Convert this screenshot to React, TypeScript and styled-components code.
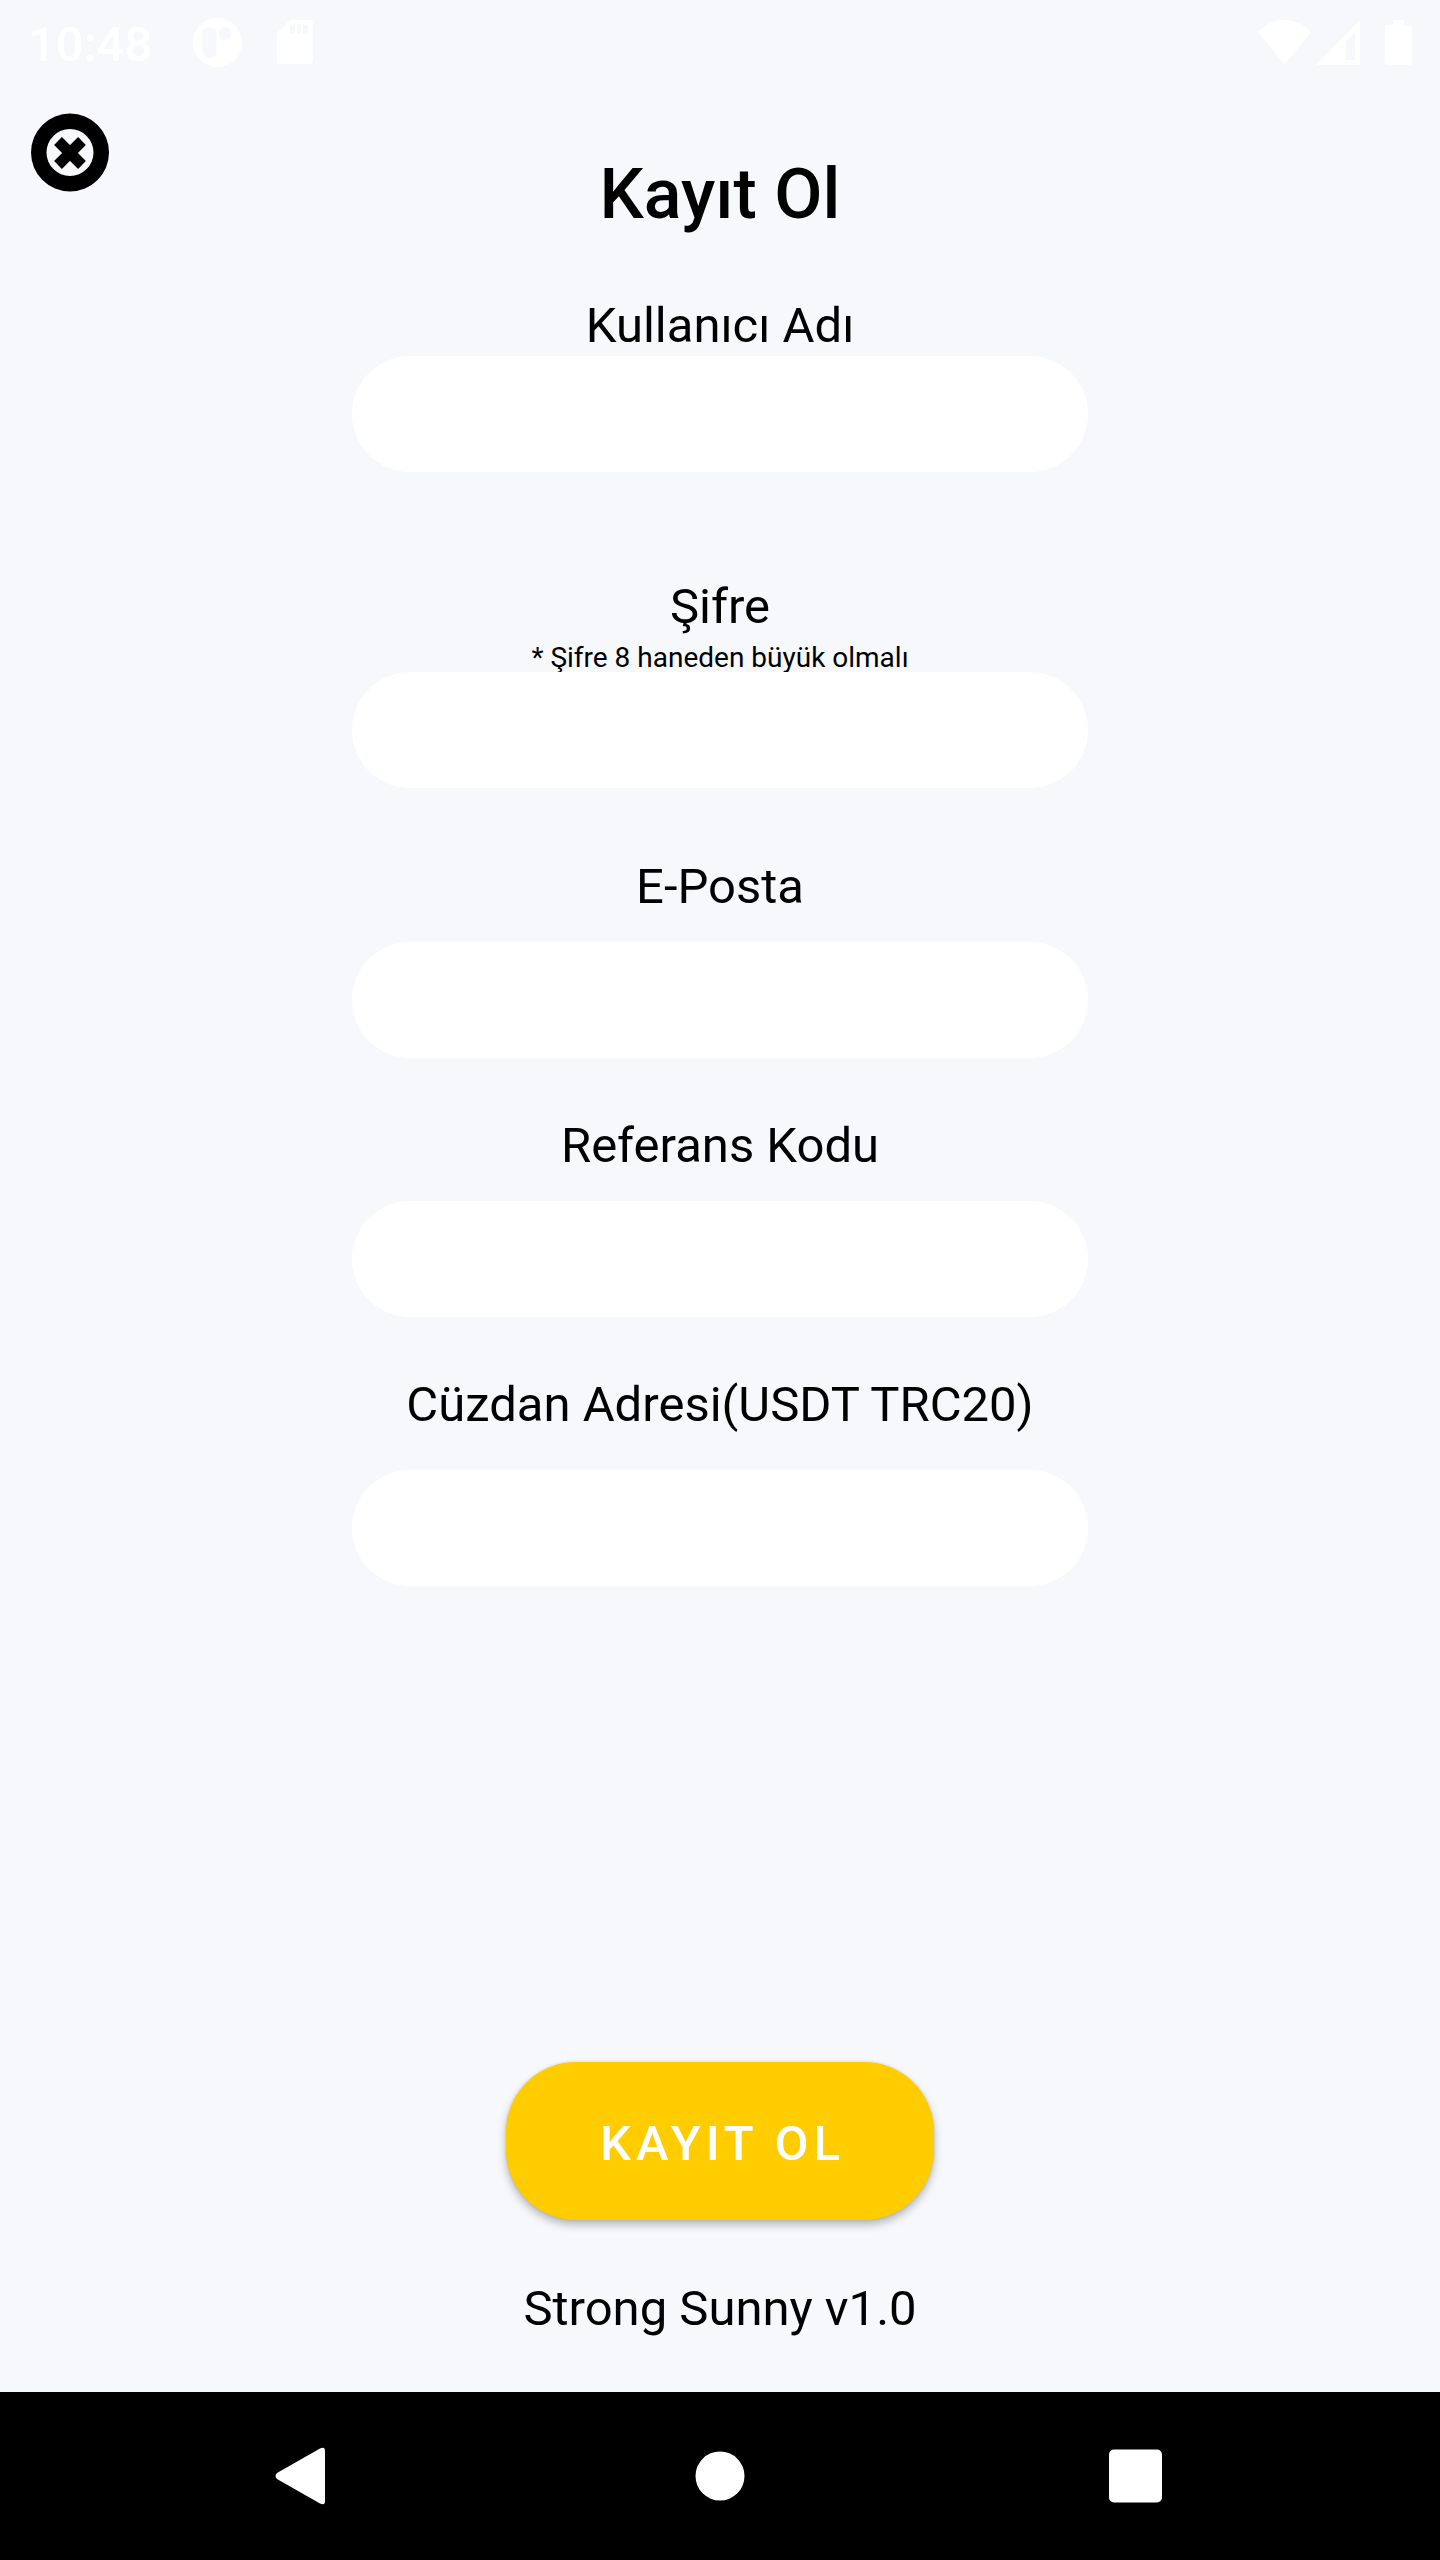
import React from "react";
import styled, { createGlobalStyle } from "styled-components";

const colors = {
  background: "#f7f8fc",
  surface: "#ffffff",
  text: "#000000",
  accent: "#ffcc00",
};

const GlobalStyle = createGlobalStyle`
  *, *::before, *::after {
    box-sizing: border-box;
  }

  body {
    margin: 0;
    background: ${colors.background};
    color: ${colors.text};
    font-family: Roboto, "Noto Sans", sans-serif;
  }
`;

const Screen = styled.div`
  display: flex;
  flex-direction: column;
  min-height: 100vh;
`;

const StatusBar = styled.header`
  display: flex;
  align-items: center;
  justify-content: space-between;
  height: 84px;
  padding: 0 28px;
  color: ${colors.surface};
`;

const StatusGroup = styled.div<{ $gap: number }>`
  display: flex;
  align-items: center;
  gap: ${(p) => p.$gap}px;
`;

const Clock = styled.time`
  margin-right: 6px;
  padding-top: 4px;
  font-size: 49px;
  font-weight: 500;
  line-height: 57px;
`;

const Icon = styled.svg`
  display: block;
  flex: none;
  fill: currentColor;
`;

const TopBar = styled.div`
  display: grid;
  grid-template-columns: 1fr auto 1fr;
  align-items: start;
  padding: 29px 31px 0;
`;

const CloseButton = styled.button`
  justify-self: start;
  padding: 0;
  border: 0;
  background: none;
  color: ${colors.text};
  cursor: pointer;
`;

const Title = styled.h1`
  margin: 40px 0 0;
  font-size: 70px;
  font-weight: 500;
  line-height: 82px;
`;

const Form = styled.form`
  display: flex;
  flex: 1;
  flex-direction: column;
  align-items: center;
  padding: 62px 24px 60px;
`;

const Field = styled.div<{ $after?: number }>`
  display: flex;
  flex-direction: column;
  align-items: center;
  width: 100%;
  max-width: 736px;
  margin-bottom: ${(p) => p.$after ?? 59}px;
`;

const Label = styled.label<{ $gap?: number }>`
  margin-bottom: ${(p) => p.$gap ?? 27}px;
  font-size: 49px;
  line-height: 57px;
  text-align: center;
`;

const Hint = styled.small`
  font-size: 28px;
  line-height: 29px;
`;

const TextBox = styled.input`
  width: 100%;
  height: 116px;
  padding: 0 48px;
  border: 0;
  border-radius: 58px;
  outline: 0;
  background: ${colors.surface};
  color: ${colors.text};
  font: inherit;
  font-size: 49px;
`;

/* The wider left padding balances the tracking that follows the last letter. */
const SubmitButton = styled.button`
  min-width: 428px;
  margin-top: auto;
  padding: 53px 56px 48px 61px;
  border: 0;
  border-radius: 70px;
  background: ${colors.accent};
  box-shadow: 0 5px 8px rgba(0, 0, 0, 0.26), 0 0 3px rgba(0, 0, 0, 0.12);
  color: ${colors.surface};
  font: inherit;
  font-size: 49px;
  font-weight: 500;
  line-height: 57px;
  letter-spacing: 5px;
  cursor: pointer;
`;

const Version = styled.footer`
  padding-bottom: 55px;
  font-size: 49px;
  line-height: 57px;
  text-align: center;
`;

const NavBar = styled.nav`
  display: flex;
  align-items: center;
  justify-content: center;
  gap: 345px;
  height: 168px;
  background: #000000;
`;

const NavButton = styled.button`
  padding: 0;
  border: 0;
  background: none;
  color: ${colors.surface};
  cursor: pointer;
`;

export default function App() {
  return (
    <>
      <GlobalStyle />
      <Screen>
        <StatusBar>
          <StatusGroup $gap={35}>
            <Clock>10:48</Clock>
            <Icon width="49" height="49" viewBox="0 0 49 49" aria-hidden="true">
              <path
                fillRule="evenodd"
                d="M24.5 0a24.5 24.5 0 1 1 0 49a24.5 24.5 0 1 1 0-49zM16.500 9a7 7 0 0 0-7 7v17a7 7 0 0 0 14 0V16a7 7 0 0 0-7-7zM32 9a6.500 6.500 0 1 0 0 13a6.500 6.500 0 1 0 0-13z"
              />
            </Icon>
            <Icon width="36" height="44" viewBox="0 0 36 44" aria-hidden="true">
              <path
                fillRule="evenodd"
                d="M13 0h19a4 4 0 0 1 4 4v36a4 4 0 0 1-4 4H4a4 4 0 0 1-4-4V13zM13 5v9h5V5zM20 5v9h4V5zM26 5v9h5V5z"
              />
            </Icon>
          </StatusGroup>
          <StatusGroup $gap={5}>
            <Icon width="53" height="45" viewBox="0 0 53 45" aria-hidden="true">
              <path d="M0 12Q12 0 26.500 0T53 12L26.500 44.500z" />
            </Icon>
            <Icon width="44" height="45" viewBox="0 0 44 45" aria-hidden="true">
              <path fillRule="evenodd" d="M44 0v45H0zM39 12l-9 9v19h9z" />
            </Icon>
            <Icon width="47" height="45" viewBox="0 0 47 45" aria-hidden="true">
              <path d="M28 0h11v5h5a3 3 0 0 1 3 3v34a3 3 0 0 1-3 3H23a3 3 0 0 1-3-3V8a3 3 0 0 1 3-3h5z" />
            </Icon>
          </StatusGroup>
        </StatusBar>

        <TopBar>
          <CloseButton type="button" aria-label="Kapat">
            <Icon width="78" height="79" viewBox="0 0 78 79" aria-hidden="true">
              <circle cx="39" cy="39.500" r="39" />
              <circle cx="39" cy="39.500" r="23.500" fill={colors.background} />
              <path
                d="M27 28l24 24M51 28L27 52"
                stroke="currentColor"
                strokeWidth="11"
                strokeLinecap="butt"
              />
            </Icon>
          </CloseButton>
          <Title>Kayıt Ol</Title>
        </TopBar>

        <Form id="register" onSubmit={(e) => e.preventDefault()}>
          <Field $after={106}>
            <Label htmlFor="username" $gap={2}>
              Kullanıcı Adı
            </Label>
            <TextBox id="username" type="text" autoComplete="username" />
          </Field>
          <Field $after={70}>
            <Label htmlFor="password" $gap={8}>
              Şifre
            </Label>
            <Hint id="password-hint">* Şifre 8 haneden büyük olmalı</Hint>
            <TextBox
              id="password"
              type="password"
              autoComplete="new-password"
              aria-describedby="password-hint"
            />
          </Field>
          <Field>
            <Label htmlFor="email">E-Posta</Label>
            <TextBox id="email" type="email" autoComplete="email" />
          </Field>
          <Field>
            <Label htmlFor="reference">Referans Kodu</Label>
            <TextBox id="reference" type="text" />
          </Field>
          <Field>
            <Label htmlFor="wallet" $gap={37}>
              Cüzdan Adresi(USDT TRC20)
            </Label>
            <TextBox id="wallet" type="text" />
          </Field>
          <SubmitButton type="submit">KAYIT OL</SubmitButton>
        </Form>

        <Version>Strong Sunny v1.0</Version>

        <NavBar>
          <NavButton type="button" aria-label="Geri">
            <Icon width="70" height="70" viewBox="0 0 70 70" aria-hidden="true">
              <path d="M7 32L50 7.500Q55 5 55 10V60Q55 65 50 62.500L7 38Q4 35 7 32z" />
            </Icon>
          </NavButton>
          <NavButton type="button" aria-label="Ana ekran">
            <Icon width="70" height="70" viewBox="0 0 70 70" aria-hidden="true">
              <circle cx="35" cy="35" r="24.500" />
            </Icon>
          </NavButton>
          <NavButton type="button" aria-label="Son uygulamalar">
            <Icon width="70" height="70" viewBox="0 0 70 70" aria-hidden="true">
              <rect x="9" y="8.500" width="53" height="53" rx="5" />
            </Icon>
          </NavButton>
        </NavBar>
      </Screen>
    </>
  );
}
